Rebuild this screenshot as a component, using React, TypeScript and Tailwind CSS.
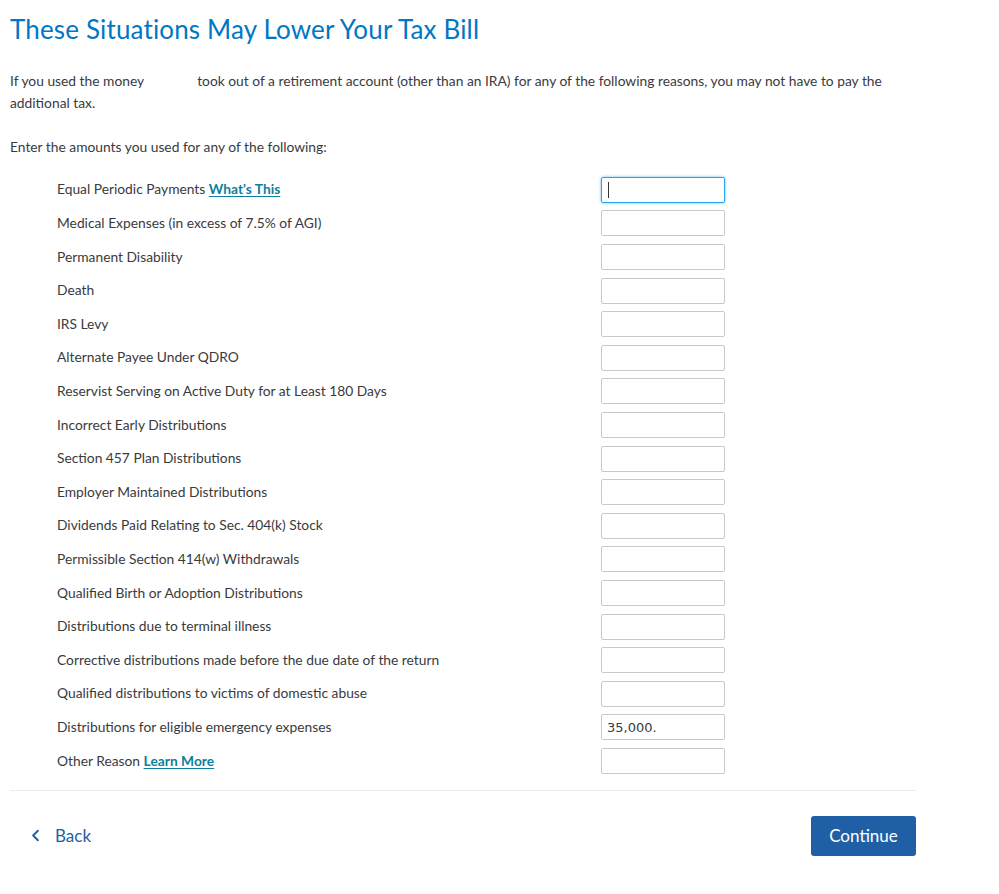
import { ChevronLeft } from 'lucide-react';

const rows: { label: string; link?: string; value?: string; focused?: boolean }[] = [
  { label: 'Equal Periodic Payments', link: "What's This", focused: true },
  { label: 'Medical Expenses (in excess of 7.5% of AGI)' },
  { label: 'Permanent Disability' },
  { label: 'Death' },
  { label: 'IRS Levy' },
  { label: 'Alternate Payee Under QDRO' },
  { label: 'Reservist Serving on Active Duty for at Least 180 Days' },
  { label: 'Incorrect Early Distributions' },
  { label: 'Section 457 Plan Distributions' },
  { label: 'Employer Maintained Distributions' },
  { label: 'Dividends Paid Relating to Sec. 404(k) Stock' },
  { label: 'Permissible Section 414(w) Withdrawals' },
  { label: 'Qualified Birth or Adoption Distributions' },
  { label: 'Distributions due to terminal illness' },
  { label: 'Corrective distributions made before the due date of the return' },
  { label: 'Qualified distributions to victims of domestic abuse' },
  { label: 'Distributions for eligible emergency expenses', value: '35,000.' },
  { label: 'Other Reason', link: 'Learn More' },
];

export default function App() {
  return (
    <div className="min-h-[894px] bg-white font-['Lato',sans-serif] text-[#393a3d]">
      <div className="w-[906px] ml-[10px]">
        <h1 className="pt-[13px] text-[26px] leading-[32px] text-[#0077c5] tracking-[0.15px]">
          These Situations May Lower Your Tax Bill
        </h1>

        <p className="mt-[25px] text-[13.8px] leading-[22px]">
          If you used the money
          <span className="inline-block w-[53px]" />
          took out of a retirement account (other than an IRA) for any of the following reasons, you may not have to pay the
          <br />
          additional tax.
        </p>

        <p className="mt-[22px] text-[13.8px] leading-[22px]">Enter the amounts you used for any of the following:</p>

        <div className="mt-[15px] flex flex-col">
          {rows.map((r) => (
            <div key={r.label} className="flex items-center h-[33.6px]">
              <div className="w-[591px] pl-[47px] text-[13.8px]">
                {r.label}
                {r.link && (
                  <>
                    {' '}
                    <a href="#" className="font-bold text-[#0d7f9c] underline underline-offset-2">
                      {r.link}
                    </a>
                  </>
                )}
              </div>
              {r.focused ? (
                <div className="w-[124px] h-[26px] border border-[#2ca2ec] rounded-[2px] shadow-[0_0_3px_#5bbcf5] flex items-center pl-[6px]">
                  <span className="w-px h-[16px] bg-[#333]" />
                </div>
              ) : (
                <input
                  readOnly
                  value={r.value ?? ''}
                  className="w-[124px] h-[26px] border border-[#c9c9c9] rounded-[2px] px-[5px] text-[13px] text-[#393a3d] font-['DejaVu_Sans',sans-serif] outline-none"
                />
              )}
            </div>
          ))}
        </div>

        <div className="mt-[12px] border-t border-[#ececec]" />

        <div className="flex items-center justify-between mt-[25px]">
          <button className="flex items-center gap-[10px] ml-[16px] text-[#1f5fa6] text-[17px]">
            <ChevronLeft size={19} strokeWidth={2.4} />
            Back
          </button>
          <button className="w-[105px] h-[40px] rounded-[3px] bg-[#1f5fa6] text-white text-[17px]">
            Continue
          </button>
        </div>
      </div>
    </div>
  );
}
